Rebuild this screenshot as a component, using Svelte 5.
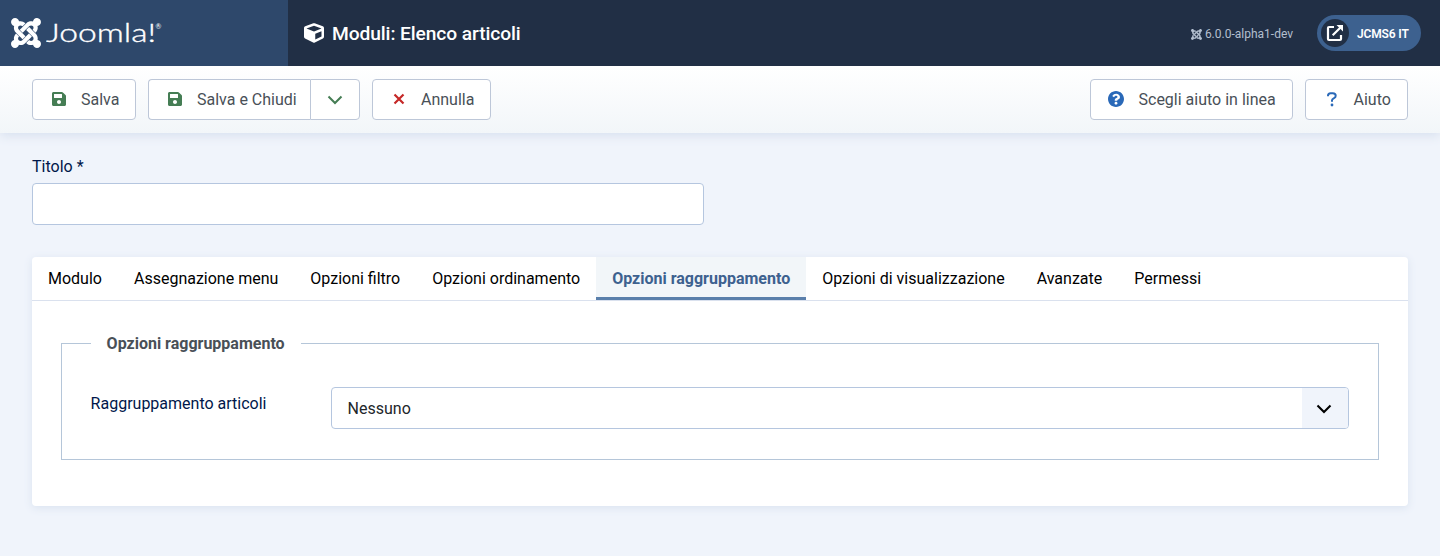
<script>
  const joomla = 'M.6 92.1C.6 58.8 27.4 32 60.4 32c30 0 54.5 21.9 59.2 50.2 32.6-7.6 67.1.6 96.5 30l-44.3 44.3c-20.5-20.5-42.6-16.3-55.4-3.5-14.3 14.3-14.3 37.9 0 52.2l99.5 99.5-44 44.3c-87.7-87.2-49.7-49.7-99.8-99.7-26.8-26.5-35-64.8-24.8-98.9C20.4 144.6.6 120.7.6 92.1zm129.5 116.4l44.3 44.3c10-10 89.7-89.7 99.7-99.8 14.3-14.3 37.6-14.3 51.9 0 12.8 12.8 17 35-3.5 55.4l44 44.3c31.2-31.2 38.5-67.6 28.9-101.2 29.2-4.1 51.9-29.2 51.9-59.5 0-33.2-26.8-60.1-59.8-60.1-30.3 0-55.4 22.5-59.5 51.6-33.8-9.9-71.7-1.5-98.3 25.1-18.3 19.1-71.1 71.5-99.6 99.9zm266.3 152.2c8.2-32.7-.9-68.5-26.3-93.9-11.8-12.2 5 4.7-99.5-99.7l-44.3 44.3 99.7 99.7c14.3 14.3 14.3 37.6 0 51.9-12.8 12.8-35 17-55.4-3.5l-44 44.3c27.6 30.2 68 38.8 102.7 28 5.5 27.4 29.7 48.1 58.9 48.1 33 0 59.8-26.8 59.8-60.1 0-30.2-22.5-55-51.6-59.1zm-84.3-53.1l-44-44.3c-87 86.4-50.4 50.4-99.7 99.8-14.3 14.3-37.6 14.3-51.9 0-13.1-13.4-16.9-35.3 3.2-55.4l-44-44.3c-30.2 30.2-38 65.2-29.5 98.3-26.7 6-46.2 29.9-46.2 58.2C0 453.2 26.8 480 59.8 480c28.6 0 52.5-19.8 58.6-46.7 32.7 8.2 68.5-.6 94.2-26 32.1-32 12.2-12.4 99.5-99.7z';
  const tabs = ['Modulo', 'Assegnazione menu', 'Opzioni filtro', 'Opzioni ordinamento', 'Opzioni raggruppamento', 'Opzioni di visualizzazione', 'Avanzate', 'Permessi'];
  let active = $state(4);
</script>

{#snippet saveIcon()}
  <svg class="ic save" viewBox="0 32 448 448"><path d="M433.941 129.941l-83.882-83.882A48 48 0 0 0 316.118 32H48C21.49 32 0 53.49 0 80v352c0 26.51 21.49 48 48 48h352c26.51 0 48-21.49 48-48V163.882a48 48 0 0 0-14.059-33.941zM224 416c-35.346 0-64-28.654-64-64 0-35.346 28.654-64 64-64s64 28.654 64 64c0 35.346-28.654 64-64 64zm96-304.52V212c0 6.627-5.373 12-12 12H76c-6.627 0-12-5.373-12-12V108c0-6.627 5.373-12 12-12h228.52c3.183 0 6.235 1.264 8.485 3.515l3.48 3.48A11.996 11.996 0 0 1 320 111.48z" /></svg>
{/snippet}

<header>
  <div class="brand">
    <svg class="mark" viewBox="0 32 448 448"><path d={joomla} /></svg>
    <svg class="word" width="120" height="32" viewBox="0 0 120 32">
      <text x="0" y="25" font-size="24.5" textLength="110" lengthAdjust="spacingAndGlyphs" stroke="#fff" stroke-width="0.35">Joomla!</text>
      <text x="109.500" y="12" font-size="7" font-weight="400">®</text>
    </svg>
  </div>
  <div class="heading">
    <svg class="cube" viewBox="0 0 512 512"><path d="M239.1 6.3l-208 78c-18.7 7-31.1 25-31.1 45v225.1c0 18.2 10.3 34.8 26.5 42.9l208 104c13.5 6.8 29.4 6.8 42.9 0l208-104c16.3-8.1 26.5-24.8 26.5-42.9V129.3c0-20-12.4-37.9-31.1-44.9l-208-78C262 2.2 250 2.2 239.1 6.3zM256 68.4l192 72v1.1l-192 78-192-78v-1.1l192-72zm32 356V275.5l160-65v133.9l-160 80z" /></svg>
    <h1>Moduli: Elenco articoli</h1>
  </div>
  <div class="version"><svg viewBox="0 32 448 448"><path d={joomla} /></svg><span>6.0.0-alpha1-dev</span></div>
  <div class="site">
    <span class="disc">
      <svg width="18" height="18" viewBox="0 0 18 18"><path d="M8 3H3Q2 3 2 4V15Q2 16 3 16H14Q15 16 15 15V11M6.700 11.300L14.500 3.500" fill="none" stroke="#fff" stroke-width="2.2" /><path d="M10.500 1H17V7.500Z" fill="#fff" /></svg>
    </span>
    <b>JCMS6 IT</b>
  </div>
</header>

<div class="toolbar">
  <button class="w1">{@render saveIcon()}<span>Salva</span></button>
  <div class="group">
    <button class="w2">{@render saveIcon()}<span>Salva e Chiudi</span></button>
    <button class="w3" aria-label="Altre opzioni"><svg width="16" height="10" viewBox="0 0 16 10"><path d="M1.500 1.500L8 8L14.500 1.500" fill="none" stroke="#457d54" stroke-width="2" /></svg></button>
  </div>
  <button class="w4"><svg class="cross" width="12" height="12" viewBox="0 0 12 12"><path d="M1.500 1.500L10.500 10.500M10.500 1.500L1.500 10.500" stroke="#c52827" stroke-width="2.200" /></svg><span>Annulla</span></button>
  <i class="spring"></i>
  <button class="w5"><svg class="ic help" viewBox="8 8 496 496"><path d="M504 256c0 136.997-111.043 248-248 248S8 392.997 8 256C8 119.083 119.043 8 256 8s248 111.083 248 248zM262.655 90c-54.497 0-89.255 22.957-116.549 63.758-3.536 5.286-2.353 12.415 2.715 16.258l34.699 26.31c5.205 3.947 12.621 3.008 16.665-2.122 17.864-22.658 30.113-35.797 57.303-35.797 20.429 0 45.698 13.148 45.698 32.958 0 14.976-12.363 22.667-32.534 33.976C247.128 238.528 216 254.941 216 296v4c0 6.627 5.373 12 12 12h56c6.627 0 12-5.373 12-12v-1.333c0-28.462 83.186-29.647 83.186-106.667 0-58.002-60.165-102-116.531-102zM256 338c-25.365 0-46 20.635-46 46 0 25.364 20.635 46 46 46s46-20.636 46-46c0-25.365-20.635-46-46-46z" /></svg><span>Scegli aiuto in linea</span></button>
  <button class="w6"><svg class="quest" width="10" height="15" viewBox="0 0 10 15"><path d="M1 4.200V3.700Q1 1.200 3.600 1.200H5.800Q8.700 1.200 8.700 3.700Q8.700 5.300 7 6.200Q5 7.200 5 8.300V9.700" fill="none" stroke="#2a69b8" stroke-width="2" /><circle cx="5" cy="13" r="1.400" fill="#2a69b8" /></svg><span>Aiuto</span></button>
</div>

<main>
  <label for="title">Titolo *</label>
  <input id="title" type="text" />
  <section>
    <nav>
      {#each tabs as tab, i}
        <button class="tab" class:on={i === active} onclick={() => (active = i)}>{tab}</button>
      {/each}
    </nav>
    <fieldset>
      <legend>Opzioni raggruppamento</legend>
      <div class="row">
        <span class="name">Raggruppamento articoli</span>
        <div class="select">
          <span>Nessuno</span>
          <i><svg width="16" height="10" viewBox="0 0 16 10"><path d="M1.500 1.500L8 8L14.500 1.500" fill="none" stroke="#000" stroke-width="2.100" /></svg></i>
        </div>
      </div>
    </fieldset>
  </section>
</main>

<style>
  :global(body) { margin: 0; background: #f0f4fb; font: 16px/24px Roboto, sans-serif; color: #22262a; height: 556px; overflow: hidden; }
  :global(*) { box-sizing: border-box; }
  svg { display: block; flex: none; }
  header { position: relative; z-index: 1; height: 66px; background: #212f45; display: flex; align-items: center; color: #fff; padding-right: 19px; }
  .brand { width: 288px; height: 66px; background: #2e486b; display: flex; align-items: center; padding-left: 11px; }
  .mark { width: 30px; height: 30px; fill: #fff; }
  .word { margin-left: 5px; fill: #fff; font-family: Lato, sans-serif; font-weight: 300; }
  .heading { display: flex; align-items: center; flex: 1; padding-left: 16px; }
  .cube { width: 20px; height: 20px; fill: #fff; }
  h1 { font-size: 19.2px; line-height: 24px; font-weight: 500; letter-spacing: -.09px; margin: 0 0 0 8px; padding-top: 1px; }
  .version { display: flex; align-items: center; gap: 3px; font-size: 12px; color: #b3bfcf; margin-right: 24px; padding-top: 2px; }
  .version svg { width: 11px; height: 11px; fill: #b3bfcf; }
  .site { width: 104px; height: 36px; border-radius: 18px; background: #3d618f; display: flex; align-items: center; padding-left: 4px; }
  .disc { width: 28px; height: 28px; border-radius: 50%; background: #212f45; display: flex; align-items: center; justify-content: center; }
  .site b { font-size: 12px; font-weight: 600; letter-spacing: -.15px; margin-left: 8px; white-space: nowrap; padding-top: 2px; }
  .toolbar { height: 67px; padding: 0 32px; display: flex; gap: 12px; align-items: center; background: linear-gradient(#fff, #f2f6f9); box-shadow: 0 3px 10px #d8e1ef; }
  button { font: inherit; margin: 0; }
  .toolbar button { height: 41px; border: 1px solid #bdc7d8; border-radius: 4px; background: #fff; color: #495057; display: flex; align-items: center; padding: 0; white-space: nowrap; }
  .group { display: flex; }
  .ic { width: 14px; height: 14px; margin-left: 19px; margin-top: -1px; }
  .save { fill: #457d54; }
  .toolbar span { margin-left: 15px; }
  .toolbar .w1 { width: 104px; }
  .toolbar .w2 { width: 162px; border-radius: 4px 0 0 4px; border-right: 0; }
  .toolbar .w3 { width: 50px; border-radius: 0 4px 4px 0; justify-content: center; padding-right: 1px; }
  .toolbar .w4 { width: 119px; }
  .cross { margin-left: 20px; margin-top: -1px; }
  .toolbar .w4 span { margin-left: 16px; }
  .spring { flex: 1; }
  .toolbar .w5 { width: 203px; }
  .help { width: 16px; height: 16px; fill: #2a69b8; margin-left: 17px; }
  .toolbar .w5 span { margin-left: 14.5px; }
  .toolbar .w6 { width: 103px; }
  .quest { margin-left: 21px; margin-top: -1px; }
  .toolbar .w6 span { margin-left: 16.5px; }
  main { padding: 22px 32px 0; }
  label { display: block; color: #00174a; }
  input { display: block; width: 672px; height: 42px; margin: 4px 0 32px; border: 1px solid #b5c6df; border-radius: 4px; background: #fff; padding: 8px 16px; font: inherit; }
  section { height: 249px; background: #fff; border-radius: 4px; box-shadow: 0 2px 8px #dae3f0; }
  nav { display: flex; height: 44px; border-bottom: 1px solid #dae1ee; }
  .tab { border: 0; background: none; padding: 0 16px; height: 43px; color: #000; white-space: nowrap; }
  .tab:first-child { border-radius: 4px 0 0 0; }
  .tab.on { background: #f2f6f9; color: #3d618f; font-weight: 700; box-shadow: inset 0 -3px #5a7fab; }
  fieldset { margin: 30px 29px 0; border: 1px solid #b5c6d9; height: 129px; padding: 0 29px; }
  legend { padding: 0 16px 0 15.6px; font-weight: 700; color: #495057; height: 24px; line-height: 26px; }
  .row { display: flex; padding-top: 32px; }
  .name { width: 240px; color: #00174a; padding-top: 5px; margin-left: -.4px; margin-right: .4px; }
  .select { flex: 1; height: 42px; border: 1px solid #b5c6df; border-radius: 4px; display: flex; align-items: center; justify-content: space-between; padding-left: 15.6px; overflow: hidden; }
  .select span { padding-top: 2px; }
  .select i { width: 46px; height: 40px; background: #f0f4fb; display: flex; align-items: center; justify-content: center; padding: 2px 2px 0 0; }
</style>
